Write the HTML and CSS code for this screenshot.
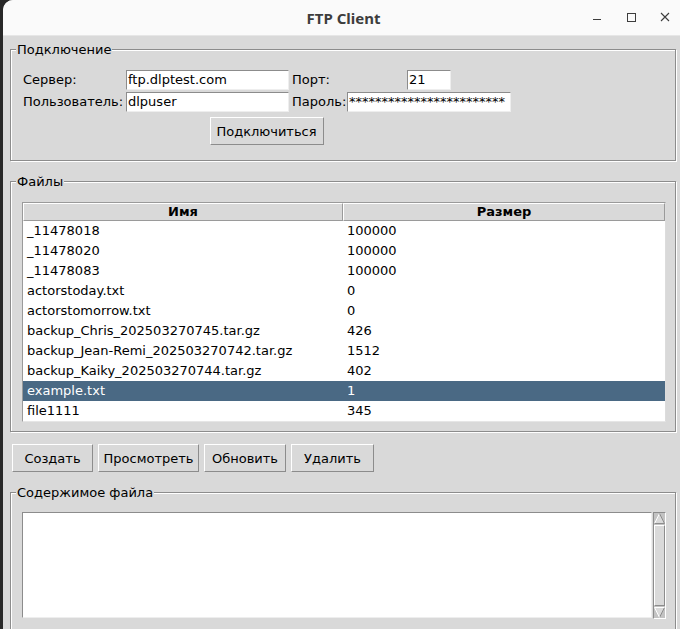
FILE: index.html
```html
<!DOCTYPE html>
<html lang="ru">
<head>
<meta charset="utf-8">
<title>FTP Client</title>
<link rel="stylesheet" href="styles.css">
</head>
<body>
<div class="window">
  <div class="titlebar">
    <div></div>
    <div class="title">FTP Client</div>
    <div class="controls">
      <div class="ctl"><svg width="10" height="10" viewBox="0 0 10 10"><path d="M1 7.5H9" stroke="#3d3d3d" stroke-width="1"/></svg></div>
      <div class="ctl"><svg width="10" height="10" viewBox="0 0 10 10"><rect x="1.5" y="1.5" width="8" height="8" fill="none" stroke="#3d3d3d" stroke-width="1"/></svg></div>
      <div class="ctl"><svg width="10" height="10" viewBox="0 0 10 10"><path d="M1 1L9 9M9 1L1 9" stroke="#3d3d3d" stroke-width="1.1"/></svg></div>
    </div>
  </div>
  <div class="content">
    <div class="lf lf-conn">
      <div class="lf-title">Подключение</div>
      <div class="conn-grid">
        <span class="lbl">Сервер:</span>
        <span class="entry">ftp.dlptest.com</span>
        <span class="lbl lbl2">Порт:</span>
        <span class="entry e-port">21</span>
        <span class="lbl">Пользователь:</span>
        <span class="entry">dlpuser</span>
        <span class="lbl lbl2">Пароль:</span>
        <span class="entry e-pass">************************</span>
        <button class="btn btn-connect">Подключиться</button>
      </div>
    </div>

    <div class="lf lf-files">
      <div class="lf-title">Файлы</div>
      <div class="tree">
        <div class="tree-head"><div class="th">Имя</div><div class="th">Размер</div></div>
        <div class="tr"><div class="td">_11478018</div><div class="td">100000</div></div>
        <div class="tr"><div class="td">_11478020</div><div class="td">100000</div></div>
        <div class="tr"><div class="td">_11478083</div><div class="td">100000</div></div>
        <div class="tr"><div class="td">actorstoday.txt</div><div class="td">0</div></div>
        <div class="tr"><div class="td">actorstomorrow.txt</div><div class="td">0</div></div>
        <div class="tr"><div class="td">backup_Chris_202503270745.tar.gz</div><div class="td">426</div></div>
        <div class="tr"><div class="td">backup_Jean-Remi_202503270742.tar.gz</div><div class="td">1512</div></div>
        <div class="tr"><div class="td">backup_Kaiky_202503270744.tar.gz</div><div class="td">402</div></div>
        <div class="tr sel"><div class="td">example.txt</div><div class="td">1</div></div>
        <div class="tr"><div class="td">file1111</div><div class="td">345</div></div>
      </div>
    </div>

    <div class="actions">
      <button class="btn b-create">Создать</button>
      <button class="btn b-view">Просмотреть</button>
      <button class="btn b-refresh">Обновить</button>
      <button class="btn b-delete">Удалить</button>
    </div>

    <div class="lf lf-content">
      <div class="lf-title">Содержимое файла</div>
      <div class="text-wrap">
        <div class="textbox"></div>
        <div class="scrollbar">
          <svg class="arrow" width="11" height="11" viewBox="0 0 11 11"><polygon points="5.5,0.5 10.5,10.5 0.5,10.5" fill="#d9d9d9"/><path d="M0.5 10.5L5.5 0.5" stroke="#ffffff" fill="none"/><path d="M5.5 0.5L10.5 10.5H0.5" stroke="#8c8c8c" fill="none"/></svg>
          <div class="slider"></div>
          <svg class="arrow" width="11" height="11" viewBox="0 0 11 11"><polygon points="0.5,0.5 10.5,0.5 5.5,10.5" fill="#d9d9d9"/><path d="M10.5 0.5L5.5 10.5" stroke="#8c8c8c" fill="none"/><path d="M5.5 10.5L0.5 0.5H10.5" stroke="#ffffff" fill="none"/></svg>
        </div>
      </div>
    </div>
  </div>
</div>
</body>
</html>
```
FILE: styles.css
```css
html, body {
  margin: 0;
  padding: 0;
}
body {
  background: #282828;
  font-family: "DejaVu Sans", "Liberation Sans", sans-serif;
  font-size: 13px;
  color: #000;
  overflow: hidden;
  height: 629px;
}
.window {
  margin-left: 3px;
  width: 677px;
  height: 629px;
  background: #d9d9d9;
  border-top-left-radius: 10px;
  overflow: hidden;
}
.titlebar {
  height: 35px;
  background: #fafafa;
  border-bottom: 1px solid #e6e6e6;
  display: grid;
  grid-template-columns: 1fr auto 1fr;
  align-items: center;
}
.title {
  font-family: "Noto Sans", "DejaVu Sans", sans-serif;
  font-weight: 700;
  font-size: 15px;
  color: #3d3d3d;
  padding-left: 4px;
}
.controls {
  justify-self: end;
  align-self: start;
  display: flex;
  gap: 4px;
}
.ctl {
  width: 30px;
  height: 34px;
  display: flex;
  align-items: center;
  justify-content: center;
}
.ctl svg { display: block; }

.content {
  padding-left: 7px;
}
.lf {
  width: 666px;
  box-sizing: border-box;
  border: 1px solid #8c8c8c;
  box-shadow: inset 1px 1px #ffffff, 1px 1px #ffffff;
}
.lf-title {
  width: max-content;
  margin: -8px 0 0 5px;
  padding: 0 1px;
  line-height: 15px;
  background: #d9d9d9;
}
.lf-conn {
  margin-top: 13px;
  padding-bottom: 15px;
}
.conn-grid {
  margin: 12px 0 0 11px;
  display: grid;
  grid-template-columns: 104px 163px 58px 164px;
  grid-template-rows: 22px 22px 32px;
  align-items: center;
}
.lbl {
  padding-left: 1px;
  line-height: 20px;
  white-space: nowrap;
}
.lbl2 {
  padding-left: 3px;
}
.entry {
  height: 20px;
  box-sizing: border-box;
  border: 1px solid;
  border-color: #8c8c8c #eeeeee #eeeeee #8c8c8c;
  background: #fff;
  padding-left: 1px;
  line-height: 18px;
  white-space: nowrap;
  overflow: hidden;
}
.e-port {
  width: 44px;
  justify-self: center;
}
.btn {
  height: 28px;
  box-sizing: border-box;
  border: 1px solid;
  border-color: #ffffff #8c8c8c #8c8c8c #ffffff;
  background: #d9d9d9;
  font-family: "DejaVu Sans", "Liberation Sans", sans-serif;
  font-size: 13px;
  color: #000;
  padding: 0;
  margin: 0;
}
.btn-connect {
  grid-column: 1 / -1;
  justify-self: center;
  align-self: end;
  width: 114px;
}

.lf-files {
  margin-top: 20px;
  padding-bottom: 9px;
}
.tree {
  margin: 13px 0 0 11px;
  width: 644px;
  box-sizing: border-box;
  border: 1px solid;
  border-color: #9a9a9a #dcdcdc #e6e6e6 #9a9a9a;
  background: #fff;
}
.tree-head {
  display: grid;
  grid-template-columns: 320px 322px;
}
.th {
  height: 18px;
  box-sizing: border-box;
  border: 1px solid;
  border-color: #ffffff #9a9a9a #9a9a9a #ffffff;
  background: #d9d9d9;
  font-weight: 700;
  text-align: center;
  line-height: 16px;
}
.tr {
  display: grid;
  grid-template-columns: 320px 322px;
  height: 20px;
  line-height: 20px;
}
.tr.sel {
  background: #4a6984;
  color: #ffffff;
}
.td {
  padding-left: 4px;
  white-space: nowrap;
  overflow: hidden;
}

.actions {
  display: flex;
  gap: 5px;
  margin: 12px 0 0 2px;
}
.b-create { width: 81px; }
.b-view { width: 101px; }
.b-refresh { width: 82px; }
.b-delete { width: 83px; }

.lf-content {
  margin-top: 20px;
  padding-bottom: 10px;
}
.text-wrap {
  margin: 12px 0 0 11px;
  display: flex;
  gap: 1px;
}
.textbox {
  width: 630px;
  height: 106px;
  box-sizing: border-box;
  border: 1px solid;
  border-color: #8c8c8c #eeeeee #eeeeee #8c8c8c;
  background: #fff;
}
.scrollbar {
  width: 13px;
  height: 107px;
  box-sizing: border-box;
  border: 1px solid;
  border-color: #8c8c8c #ffffff #ffffff #8c8c8c;
  background: #c3c3c3;
  display: flex;
  flex-direction: column;
  align-items: center;
}
.arrow {
  display: block;
  flex: none;
}
.slider {
  flex: 1;
  width: 11px;
  box-sizing: border-box;
  margin: 1px 0;
  border: 1px solid;
  border-color: #ffffff #8c8c8c #8c8c8c #ffffff;
  background: #d9d9d9;
}
```
